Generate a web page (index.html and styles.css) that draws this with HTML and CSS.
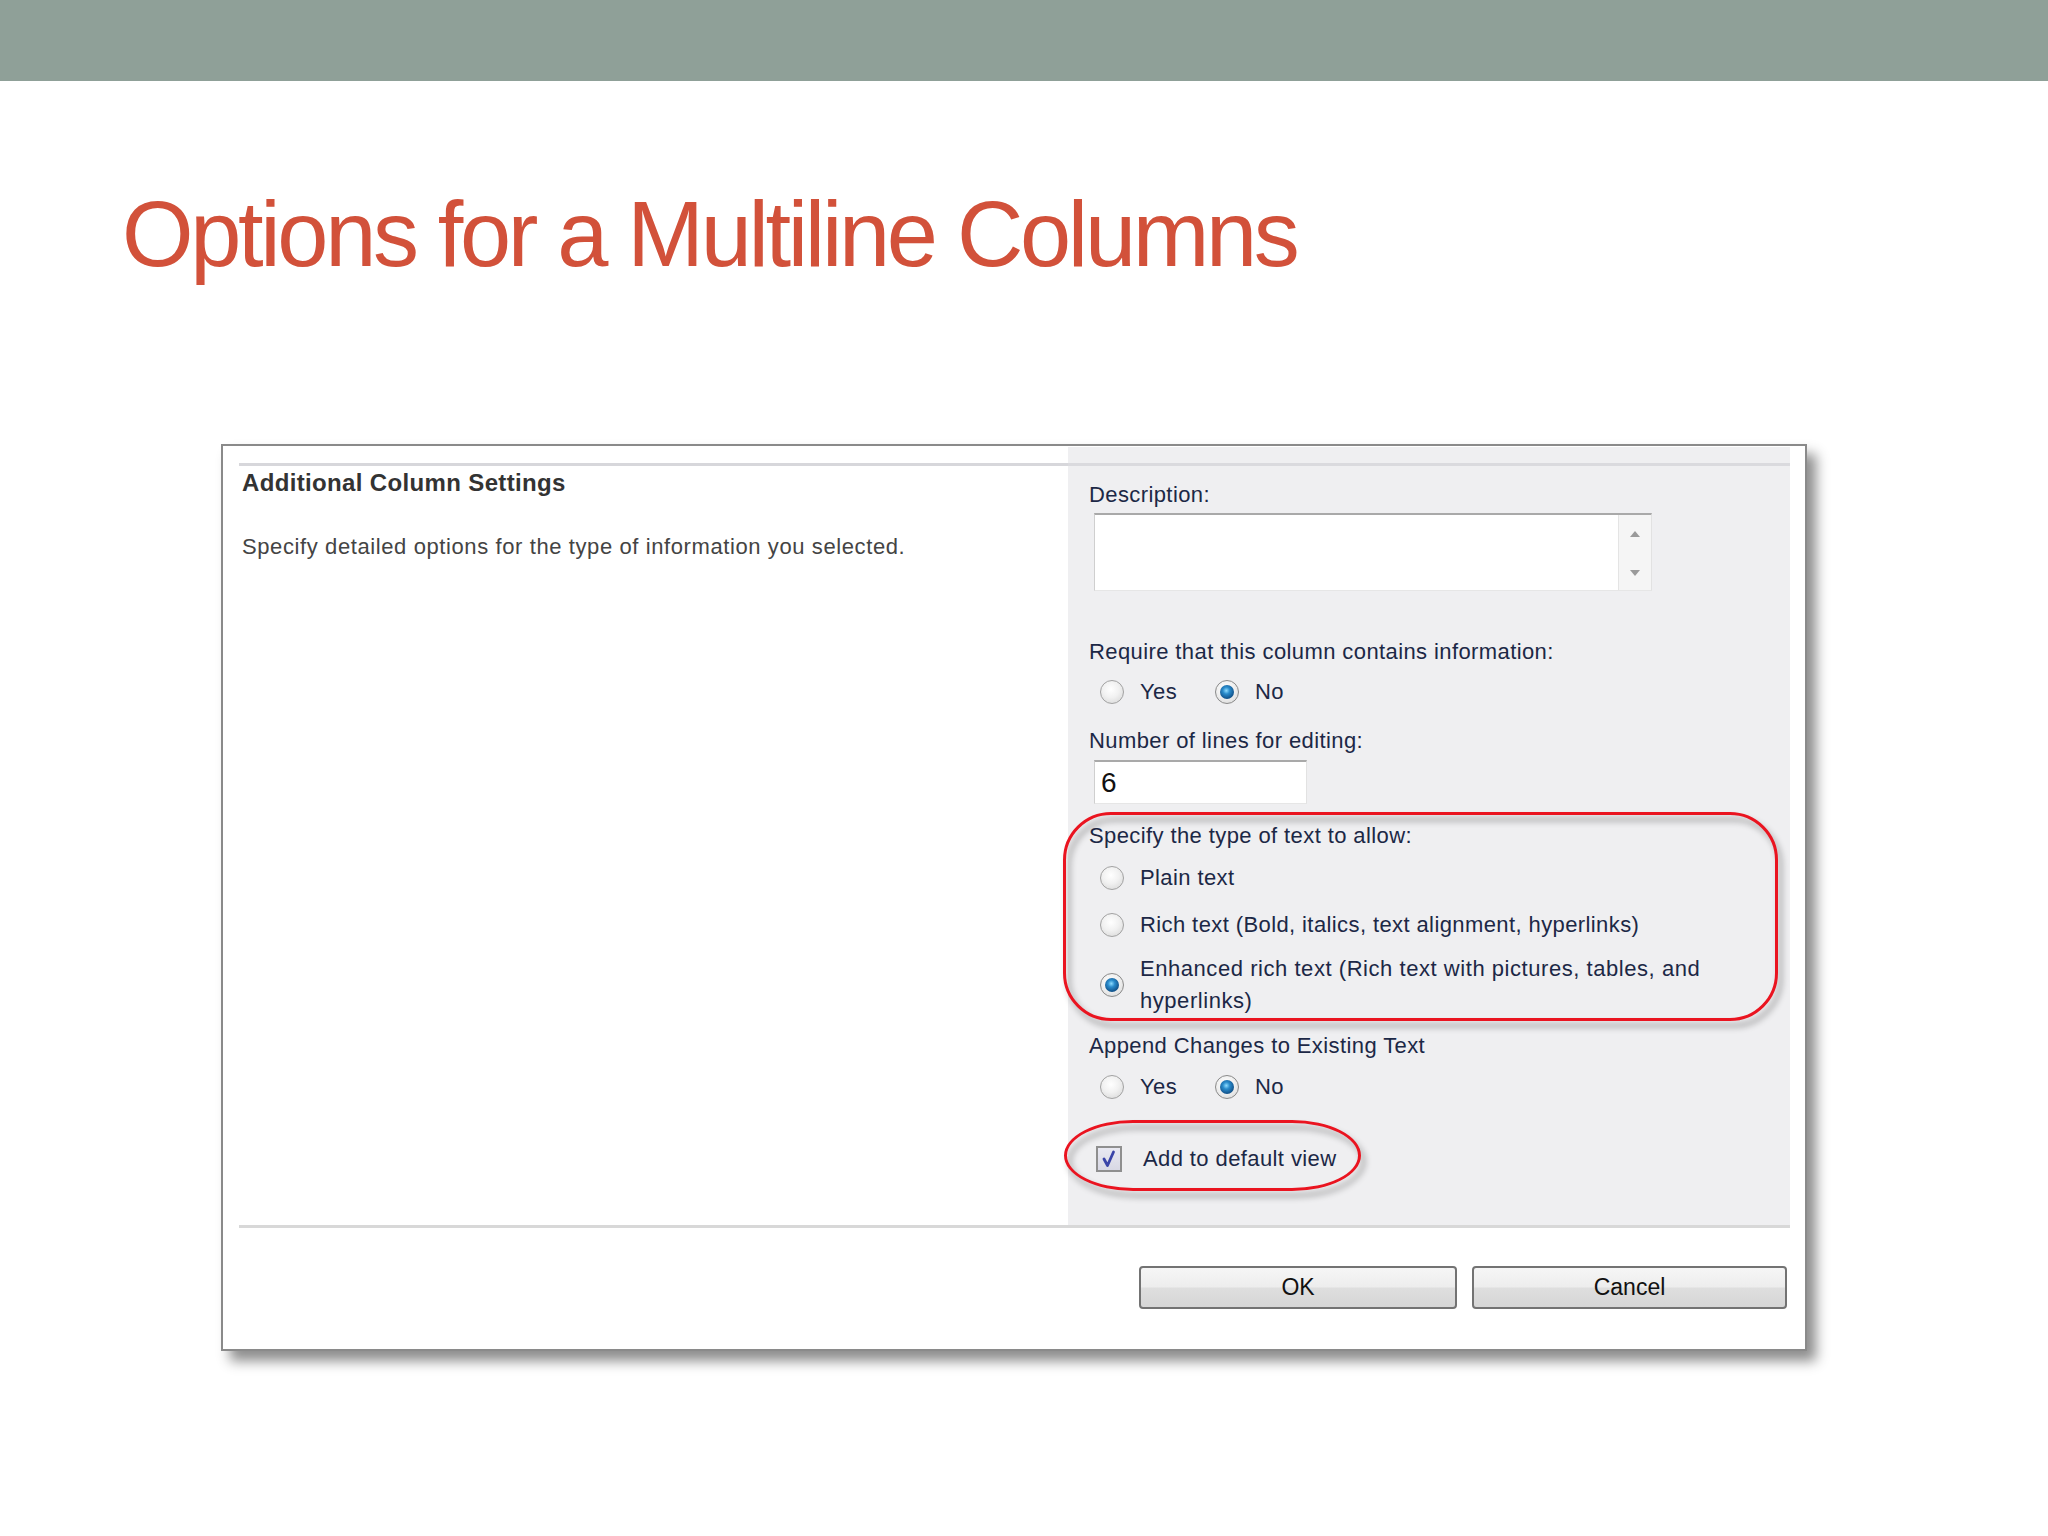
FILE: index.html
```html
<!DOCTYPE html>
<html lang="en">
<head>
<meta charset="utf-8">
<title>Options for a Multiline Columns</title>
<link rel="stylesheet" href="styles.css">
</head>
<body>
<div class="topbar"></div>
<h1 class="title">Options for a Multiline Columns</h1>

<div class="dialog">
  <div class="main">
    <div class="col-left">
      <div class="rule"></div>
      <div class="section-head">Additional Column Settings</div>
      <div class="section-desc">Specify detailed options for the type of information you selected.</div>
    </div>
    <div class="col-right">
      <div class="rule rule-gray"></div>
      <div class="fields">
        <div class="label l-desc">Description:</div>
        <div class="textarea">
          <div class="ta-body"></div>
          <div class="ta-scroll">
            <span class="arrow-up"></span>
            <span class="arrow-down"></span>
          </div>
        </div>

        <div class="label l-require">Require that this column contains information:</div>
        <div class="radio-row r-require">
          <span class="opt opt-yes"><span class="radio"></span><span class="opt-text">Yes</span></span>
          <span class="opt"><span class="radio on"></span><span class="opt-text">No</span></span>
        </div>

        <div class="label l-lines">Number of lines for editing:</div>
        <div class="input-box">6</div>

        <div class="label l-type">Specify the type of text to allow:</div>
        <div class="radio-row r-plain">
          <span class="opt"><span class="radio"></span><span class="opt-text">Plain text</span></span>
        </div>
        <div class="radio-row r-rich">
          <span class="opt"><span class="radio"></span><span class="opt-text">Rich text (Bold, italics, text alignment, hyperlinks)</span></span>
        </div>
        <div class="radio-row r-enh">
          <span class="opt"><span class="radio on"></span><span class="opt-text wrap">Enhanced rich text (Rich text with pictures, tables, and hyperlinks)</span></span>
        </div>

        <div class="label l-append">Append Changes to Existing Text</div>
        <div class="radio-row r-append">
          <span class="opt opt-yes"><span class="radio"></span><span class="opt-text">Yes</span></span>
          <span class="opt"><span class="radio on"></span><span class="opt-text">No</span></span>
        </div>

        <div class="check-row">
          <span class="checkbox">
            <svg viewBox="0 0 22 22" width="22" height="22"><path d="M6 11 L9.5 17.5 L15.5 4" fill="none" stroke="#3a44a8" stroke-width="2.8" stroke-linecap="round" stroke-linejoin="round"/></svg>
          </span>
          <span class="opt-text">Add to default view</span>
        </div>
      </div>
      <div class="mark mark-type"></div>
      <div class="mark mark-view"></div>
    </div>
  </div>
  <div class="bottom-rule"></div>
  <div class="footer">
    <button class="btn btn-ok">OK</button>
    <button class="btn btn-cancel">Cancel</button>
  </div>
</div>
</body>
</html>
```

FILE: styles.css
```css
html, body {
  margin: 0;
  padding: 0;
  background: #ffffff;
}
body {
  width: 2048px;
  height: 1536px;
  overflow: hidden;
  font-family: "Liberation Sans", Arial, sans-serif;
}

.topbar {
  height: 81px;
  background: #8fa098;
}

.title {
  margin: 107px 0 0 122px;
  font-weight: normal;
  font-size: 92px;
  line-height: 92px;
  height: 92px;
  letter-spacing: -3.35px;
  color: #d2513a;
  white-space: nowrap;
}

.dialog {
  margin: 164px 0 0 221px;
  border: 2px solid #8a8a8a;
  background: #ffffff;
  padding: 0 15px 0 16px;
  box-sizing: content-box;
  width: 1551px;
  box-shadow: 9px 10px 12px rgba(0, 0, 0, 0.45);
}

.main {
  display: grid;
  grid-template-columns: 829px 722px;
  padding-top: 1px;
}

.rule {
  height: 3px;
  background: #d7d7db;
}

.col-left {
  padding-top: 16px;
}
.section-head {
  margin: 2px 0 0 3px;
  font-weight: bold;
  font-size: 24px;
  line-height: 30px;
  letter-spacing: 0.35px;
  color: #333333;
}
.section-desc {
  margin: 36px 0 0 3px;
  font-size: 22px;
  line-height: 26px;
  letter-spacing: 0.6px;
  color: #444444;
}

.col-right {
  position: relative;
  background: #efeff1;
  padding-top: 16px;
  padding-bottom: 51px;
}
.rule-gray {
  background: #dadade;
}
.fields {
  padding-left: 21px;
  display: flex;
  flex-direction: column;
  align-items: flex-start;
  color: #1c2846;
  font-size: 22px;
  letter-spacing: 0.4px;
}
.label {
  line-height: 26px;
  height: 26px;
  white-space: nowrap;
}
.l-desc { margin-top: 16px; }
.l-require { margin-top: 48px; }
.l-lines { margin-top: 21px; }
.l-type { margin-top: 19px; }
.l-append { margin-top: 16px; }

.textarea {
  margin: 5px 0 0 5px;
  width: 558px;
  height: 78px;
  box-sizing: border-box;
  display: flex;
  background: #ffffff;
  border-top: 2px solid #a9a9a9;
  border-left: 1px solid #cfcfcf;
  border-right: 1px solid #e2e2e2;
  border-bottom: 1px solid #e6e6e6;
}
.ta-body { flex: 1; }
.ta-scroll {
  width: 32px;
  background: #f5f5f5;
  border-left: 1px solid #e4e4e4;
  display: flex;
  flex-direction: column;
  align-items: center;
  justify-content: space-between;
  padding: 16px 0 14px;
}
.arrow-up {
  width: 0; height: 0;
  border-left: 5px solid transparent;
  border-right: 5px solid transparent;
  border-bottom: 6px solid #9a9a9a;
}
.arrow-down {
  width: 0; height: 0;
  border-left: 5px solid transparent;
  border-right: 5px solid transparent;
  border-top: 6px solid #9a9a9a;
}

.radio-row {
  display: flex;
  align-items: center;
  min-height: 30px;
  padding-left: 11px;
}
.r-require { margin-top: 12px; }
.r-plain { margin-top: 14px; }
.r-rich { margin-top: 17px; }
.r-enh { margin-top: 13px; }
.r-append { margin-top: 13px; }

.opt {
  display: flex;
  align-items: center;
}
.opt-yes { width: 115px; }
.opt-text {
  margin-left: 16px;
  line-height: 26px;
  white-space: nowrap;
}
.opt-text.wrap {
  white-space: normal;
  width: 600px;
  line-height: 32px;
  letter-spacing: 0.55px;
}

.radio {
  position: relative;
  flex: none;
  width: 24px;
  height: 24px;
  box-sizing: border-box;
  border-radius: 50%;
  border: 1.5px solid #a2a2a2;
  background: radial-gradient(circle at 45% 38%, #ffffff 0%, #f1f1f1 45%, #d3d3d3 100%);
}
.radio.on {
  border-color: #8a8a8a;
}
.radio.on::after {
  content: "";
  position: absolute;
  left: 3.5px;
  top: 3.5px;
  width: 14px;
  height: 14px;
  border-radius: 50%;
  background: radial-gradient(circle at 45% 40%, #8fdcff 0%, #2a8ccc 30%, #155a94 65%, #0a3560 100%);
}

.input-box {
  margin: 6px 0 0 5px;
  width: 213px;
  height: 44px;
  box-sizing: border-box;
  background: #ffffff;
  border-top: 2px solid #a9a9a9;
  border-left: 1px solid #cfcfcf;
  border-right: 1px solid #e2e2e2;
  border-bottom: 1px solid #e6e6e6;
  padding-left: 6px;
  font-size: 28px;
  line-height: 42px;
  color: #111111;
  letter-spacing: 0;
}

.check-row {
  margin-top: 42px;
  padding-left: 7px;
  display: flex;
  align-items: center;
  height: 30px;
}
.check-row .opt-text { margin-left: 21px; }
.checkbox {
  flex: none;
  width: 26px;
  height: 26px;
  box-sizing: border-box;
  border: 2px solid #8f8f8f;
  background: linear-gradient(#e9e9f2, #d8d8e4);
  display: flex;
  align-items: center;
  justify-content: center;
}

.mark {
  position: absolute;
  box-sizing: border-box;
  border: 3.5px solid #ea1420;
  filter: drop-shadow(4px 6px 3px rgba(0, 0, 0, 0.38));
  pointer-events: none;
}
.mark-type {
  left: -5px;
  top: 365px;
  width: 715px;
  height: 209px;
  border-radius: 48px;
}
.mark-view {
  left: -4px;
  top: 673px;
  width: 297px;
  height: 71px;
  border-radius: 70px / 36px;
}

.bottom-rule {
  height: 3px;
  background: #d8d8d8;
}

.footer {
  display: flex;
  justify-content: flex-end;
  gap: 15px;
  padding: 38px 3px 40px 0;
}
.btn {
  height: 43px;
  box-sizing: border-box;
  border: 2px solid #737373;
  border-radius: 4px;
  background: linear-gradient(#f6f6f6 0%, #ededed 48%, #dedede 52%, #d6d6d6 100%);
  font-family: "Liberation Sans", Arial, sans-serif;
  font-size: 23px;
  color: #111111;
  padding: 0;
}
.btn-ok { width: 318px; }
.btn-cancel { width: 315px; }
```
